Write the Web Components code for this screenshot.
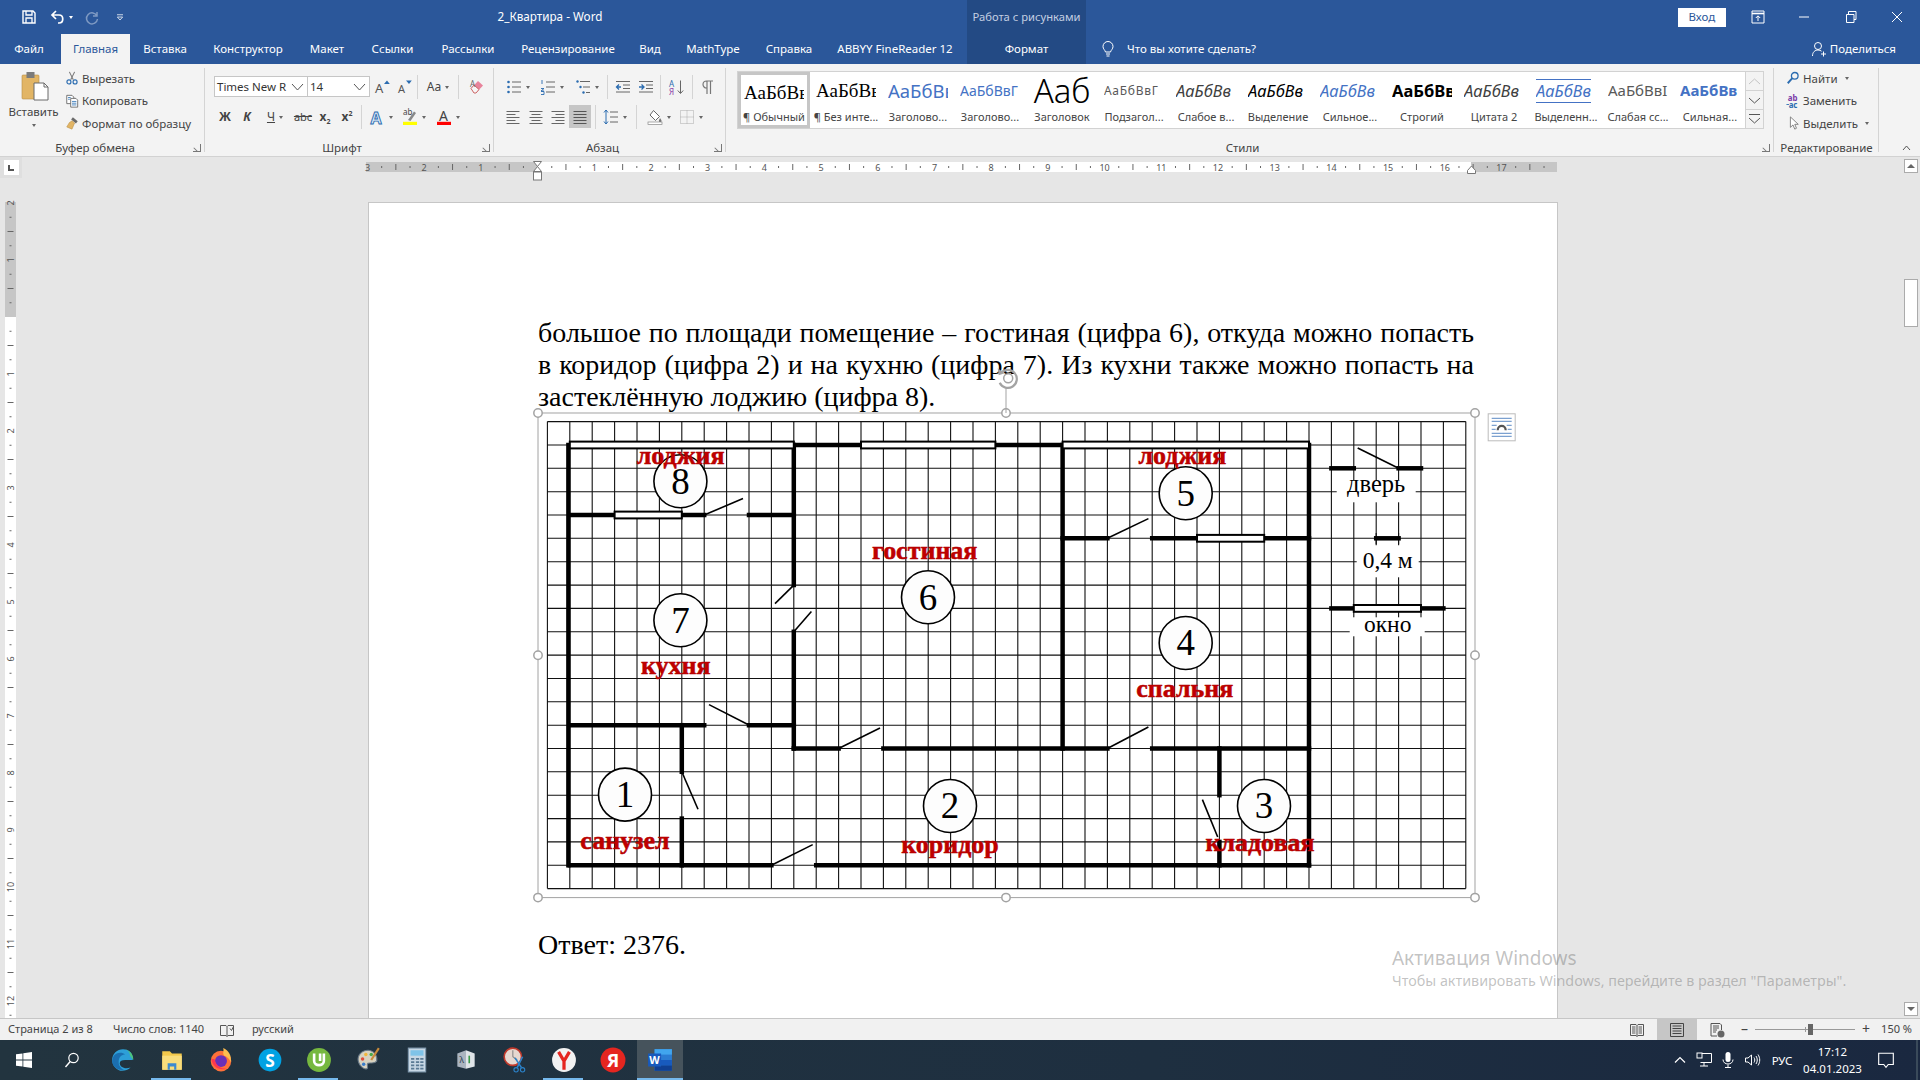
<!DOCTYPE html>
<html lang="ru">
<head>
<meta charset="utf-8">
<title>2_Квартира - Word</title>
<style>
  html, body { margin: 0; height: 1080px; overflow: hidden; }
  body { font: 12px "Noto Sans", "Open Sans", sans-serif; color: #444; display: flex; flex-direction: column; background: #e6e6e6; position: relative; }
</style>
</head>
<body>
<word-titlebar></word-titlebar>
<word-tabs></word-tabs>
<word-ribbon></word-ribbon>
<word-docarea></word-docarea>
<word-statusbar></word-statusbar>
<win-taskbar></win-taskbar>
<win-watermark></win-watermark>

<script>
const ICONS = {
    save: '<path d="M2 2h10l2 2v10H2z" fill="none" stroke="#fff" stroke-width="1.4"/><path d="M5 2v4h6V2M5 14V9h6v5" fill="none" stroke="#fff" stroke-width="1.3"/>',
    undo: '<path d="M6 2 2 6l4 4M2.5 6H9c5 0 5 8 0 8H8" fill="none" stroke="#fff" stroke-width="1.7"/>',
    redo: '<path d="M13 3v4H9M13 7a5.5 5.5 0 1 0 .5 3" fill="none" stroke="#7f9ac3" stroke-width="1.5"/>',
    qamore: '<path d="M4 5h8" stroke="#fff"/><path d="M4.5 8h7L8 12z" fill="none" stroke="#fff"/>',
    ribbonopt: '<path d="M2 2h12v12H2z" fill="none" stroke="#fff"/><path d="M2 4.5h12" stroke="#fff" stroke-width="1.6"/><path d="M8 12V7M5.8 9 8 6.8 10.2 9" fill="none" stroke="#fff"/>',
    min: '<path d="M3 8h10" stroke="#fff"/>',
    restore: '<path d="M3.5 5.5h7.5v8H3.5zM5.5 5.5v-3H13v8h-2" fill="none" stroke="#fff"/>',
    close: '<path d="m3 3 10 10M13 3 3 13" stroke="#fff"/>',
    bulb: '<path d="M5.5 11C5 9 3 8 3 5.5a5 5 0 0 1 10 0C13 8 11 9 10.500 11zM6 13h4M6.500 15h3" fill="none" stroke="#fff"/>',
    share: '<circle cx="7" cy="5" r="3.500" fill="none" stroke="#fff"/><path d="M1.500 15c0-4 2.500-6 5.500-6 1.500 0 2.500.5 3.500 1.200M12.500 10.500v5M10 13h5" fill="none" stroke="#fff"/>',
    paste: '<rect x="1" y="4" width="17" height="24" rx="1" fill="#e2b565" stroke="#b98d44" stroke-width=".6"/><rect x="5.500" y="1" width="8" height="6" fill="#7b7b7b"/><path d="M13 12h10l4 4v13H13z" fill="#fff" stroke="#6a6a6a"/><path d="M23 12v4h4" fill="none" stroke="#6a6a6a"/>',
    cut: '<path d="M5 1l4.500 9M11 1 6.500 10" stroke="#777" stroke-width="1.200"/><circle cx="4.500" cy="12.500" r="2.300" fill="none" stroke="#2b6cb0" stroke-width="1.300"/><circle cx="11.500" cy="12.500" r="2.300" fill="none" stroke="#2b6cb0" stroke-width="1.300"/>',
    copy: '<path d="M2 1.500h6l2 2V11H2z" fill="#fff" stroke="#666"/><path d="M6.500 5h6l2 2v8h-8z" fill="#fff" stroke="#666"/><path d="M8 8.500h5M8 10.500h5M8 12.500h5M3.500 4h3M3.500 6h2" stroke="#3a7ab8"/>',
    painter: '<path d="M9 1.500 14.500 6l-2 2.500L7 4z" fill="#6a6a6a"/><path d="M8 5.500l3 2.500-3 7-6-2.500 3-5z" fill="#e2b565" stroke="#b98d44" stroke-width=".6"/>',
    grow: '<text x="1" y="14" font-family="Noto Sans" font-size="13" fill="#555">A</text><path d="m10 5 3-3.500L15.800 5z" fill="#2b6cb0"/>',
    shrink: '<text x="2" y="14" font-family="Noto Sans" font-size="11" fill="#555">A</text><path d="m10 1.500 3 3.500 2.800-3.500z" fill="#2b6cb0"/>',
    eraser: '<path d="M2 9.500 9 2l5 4.500-7 7.500H5z" fill="#e8839b"/><path d="M2 9.500 5 6l5 4.500L7 14H5z" fill="#f6f6f6" stroke="#c66"/><text x="1" y="8" font-family="Noto Sans" font-size="8" fill="#666">A</text>',
    texteffect: '<text x="1.500" y="14.500" font-family="Noto Sans" font-weight="700" font-size="16" fill="#dbe9f7" stroke="#2b6cb0" stroke-width=".9">A</text>',
    marker: '<text x="1" y="6" font-family="Noto Sans" font-size="8" fill="#444">ab</text><path d="M6 11 12 2.500l2 1.500-5.500 8z" fill="#888"/><rect x="1" y="12.800" width="14" height="3.200" fill="#ff0"/>',
    fontcolor: '<text x="3" y="11.500" font-family="Noto Sans" font-size="14" fill="#444">A</text><rect x="1" y="12.800" width="14" height="3.200" fill="#f00"/>',
    bullets: '<circle cx="2.500" cy="3" r="1.300" fill="#2b6cb0"/><circle cx="2.500" cy="8" r="1.300" fill="#2b6cb0"/><circle cx="2.500" cy="13" r="1.300" fill="#2b6cb0"/><path d="M6 3h9M6 8h9M6 13h9" stroke="#666"/>',
    numbers: '<path d="M6 3h9M6 8h9M6 13h9" stroke="#666"/><path d="M2 1v4M1 9.500h3l-3 2.500h3M1 12.500h3v3H1" fill="none" stroke="#2b6cb0" stroke-width=".9"/>',
    multilevel: '<path d="M5 2.500h10M8 8h7M11 13.500h4" stroke="#666"/><circle cx="2.500" cy="2.500" r="1.200" fill="#2b6cb0"/><circle cx="5.500" cy="8" r="1.200" fill="#2b6cb0"/><circle cx="8.500" cy="13.500" r="1.200" fill="#2b6cb0"/>',
    indentdec: '<path d="M1 2.500h14M8 6h7M8 9.500h7M1 13h14" stroke="#666"/><path d="M6 8H1.500M4 5.500 1.500 8 4 10.500" fill="none" stroke="#2b6cb0" stroke-width="1.300"/>',
    indentinc: '<path d="M1 2.500h14M8 6h7M8 9.500h7M1 13h14" stroke="#666"/><path d="M1 8h5M3.500 5.500 6 8l-2.500 2.500" fill="none" stroke="#2b6cb0" stroke-width="1.300"/>',
    sort: '<text x="0" y="7.500" font-family="Noto Sans" font-size="8" fill="#2b6cb0">А</text><text x="0" y="15.500" font-family="Noto Sans" font-size="8" fill="#8a3aa8">Я</text><path d="M11.500 1.500v12.500M8.800 11.500l2.700 3 2.700-3" fill="none" stroke="#666"/>',
    pilcrow: '<path d="M7 2v13M10.500 2v13M13 2H6.500a3.500 3.500 0 0 0 0 7H7" fill="none" stroke="#777" stroke-width="1.200"/>',
    alignleft: '<path d="M1.500 2.500h13M1.500 5.500h9M1.500 8.500h13M1.500 11.500h9M1.500 14.500h13" stroke="#666"/>',
    aligncenter: '<path d="M1.500 2.500h13M3.500 5.500h9M1.500 8.500h13M3.500 11.500h9M1.500 14.500h13" stroke="#666"/>',
    alignright: '<path d="M1.500 2.500h13M5.500 5.500h9M1.500 8.500h13M5.500 11.500h9M1.500 14.500h13" stroke="#666"/>',
    justify: '<path d="M1.500 2.500h13M1.500 5.500h13M1.500 8.500h13M1.500 11.500h13M1.500 14.500h13" stroke="#555"/>',
    linespacing: '<path d="M7 3h8M7 8h8M7 13h8" stroke="#666"/><path d="M3 1v14M1 3.500 3 1l2 2.500M1 12.500 3 15l2-2.500" fill="none" stroke="#2b6cb0"/>',
    shading: '<path d="m6.500 1.500 6 6-4 4-5.500-5.500z" fill="#fff" stroke="#666"/><path d="M13 9c1 1.500 1.500 2 1.500 3a1.300 1.300 0 0 1-2.600 0c0-1 .5-1.500 1.100-3z" fill="#777"/><rect x="1" y="13" width="14" height="2.500" fill="#fff" stroke="#888" stroke-width=".7"/>',
    borders: '<path d="M1.500 1.500h13v13h-13zM8 1.500v13M1.500 8h13" fill="none" stroke="#aaa" stroke-dasharray="1 1"/>',
    find: '<circle cx="10" cy="5.500" r="3.800" fill="none" stroke="#2b6cb0" stroke-width="1.500"/><path d="m7 8.500-5 5.500" stroke="#2b6cb0" stroke-width="2.200"/>',
    replace: '<text x="2" y="7.500" font-family="Noto Sans" font-weight="700" font-size="9" fill="#7a3aa8">ab</text><text x="3" y="15.500" font-family="Noto Sans" font-weight="700" font-size="9" fill="#2b6cb0">ac</text><path d="M.5 12h3" stroke="#2b6cb0"/>',
    select: '<path d="M5 1v12l3-2.800L10 15l2-1-2-4.500h4z" fill="#fff" stroke="#777"/>',
    book: '<path d="M1.500 3.500h5.500l1 1 1-1h5.500v10h-5.500l-1 1-1-1H1.500zM8 4.500v10" fill="none" stroke="#555"/><path d="M11 6.500l1.500 2 2-4" fill="none" stroke="#555"/>',
    read: '<path d="M1.500 2.500h5.500l1 1 1-1h5.500v11H9l-1 1-1-1H1.500zM8 3.500v11M3 5h3.500M3 7h3.500M3 9h3.500M3 11h3.500M9.500 5H13M9.500 7H13M9.500 9H13M9.500 11H13" fill="none" stroke="#555"/>',
    print: '<path d="M1.500 1.500h13v13h-13zM3.500 4h9M3.500 6.500h9M3.500 9h9M3.500 11.500h9" fill="none" stroke="#444"/>',
    web: '<path d="M2 1.500h9l1.500 1.500v5M2 1.500v12.500h6M4 4h6M4 6h6M4 8h4M4 10h3" fill="none" stroke="#555"/><circle cx="12" cy="12" r="3.500" fill="#666"/>',
    netw: '<path d="M6 1.500h9.500v9h-11M8 10.500V14M4 14h8" fill="none" stroke="#fff"/><rect x="1" y="1" width="5" height="5" fill="#1b2a40" stroke="#fff"/>',
    mic: '<rect x="5.500" y="0" width="5" height="10" rx="2.500" fill="#fff"/><path d="M3 7.500c0 6 10 6 10 0M8 12.500V15M5 15.500h6" fill="none" stroke="#fff"/>',
    speaker: '<path d="M1.500 6h2.500l3.500-3v10L4 10H1.500z" fill="none" stroke="#fff"/><path d="M10 5.500c1 1.500 1 3.500 0 5M12 4c1.700 2.500 1.700 5.500 0 8M14 2.500c2.300 3.500 2.300 7.500 0 11" fill="none" stroke="#fff"/>',
    chevup: '<path d="m3 10.500 5-5 5 5" fill="none" stroke="#fff" stroke-width="1.200"/>',
    notify: '<path d="M1.500 2h13v10H10l-2 2.500L6 12H1.500z" fill="none" stroke="#fff"/>',
    winlogo: '<path d="M0 2.300 6.500 1.400V7.600H0zM7.300 1.300 16 0V7.600H7.300zM0 8.400h6.500v6.200L0 13.700zM7.300 8.400H16V16l-8.700-1.300z" fill="#fff"/>',
    search: '<circle cx="9.500" cy="6" r="4.700" fill="none" stroke="#fff" stroke-width="1.200"/><path d="M6.200 9.500 1.500 15" stroke="#fff" stroke-width="1.400"/>',
    edge: '<path d="M12 2a10 10 0 0 0-10 10c0 6 5 10 9 10 3 0 6-1 8-3-6 2-10-1-10-4 0-2 2-3 5-3h7c.5-6-3-10-9-10z" fill="#2d9fd8"/><path d="M3 9c2-4 8-5 11-2-3 0-6 2-6 7 0 3 2 6 5 7-6 1-11-3-11-8z" fill="#1b6fb0"/><path d="M21.500 12c.3-5-3-9-8-10 4 1 5 4 5 6z" fill="#4dc47d"/>',
    explorer: '<path d="M3 4h7l2 2h9v15H3z" fill="#f2c84b"/><path d="M3 8h18v13H3z" fill="#f8dd7c"/><path d="M8 15h8v6H8z" fill="#3b8ad0"/><path d="M10 18h4v3h-4z" fill="#f8dd7c"/>',
    firefox: '<circle cx="12" cy="13" r="9.500" fill="#ff7139"/><path d="M14 1c1 3-1 5 1 7 3 1 5 3 6 6 1-6-2-11-7-13z" fill="#ffbd4f"/><circle cx="12" cy="13" r="5.500" fill="#6a2fb8"/><path d="M3 11c1 7 7 11 14 9-5 0-10-3-11-9z" fill="#ff3750"/>',
    skype: '<circle cx="12" cy="12" r="10.500" fill="#00a2e3"/><text x="12" y="18" text-anchor="middle" font-family="Noto Sans" font-weight="700" font-size="16" fill="#fff">S</text>',
    utorrent: '<circle cx="12" cy="12" r="11" fill="#76b83f"/><path d="M7.500 6v7c0 5 9 5 9 0V6M13 6v7" fill="none" stroke="#fff" stroke-width="2.400"/>',
    paint: '<path d="M12 3C6 3 2 8 3 13c1 5 6 8 8 7 2-1-1-3 1-5 2-1 6 1 8-2 1-5-3-10-8-10z" fill="#d8d2c0" stroke="#6a7a88"/><circle cx="7" cy="11" r="1.600" fill="#e04b3a"/><circle cx="10" cy="7" r="1.600" fill="#f2b63c"/><circle cx="15" cy="7" r="1.600" fill="#4aa84a"/><circle cx="8" cy="16" r="1.600" fill="#3b7dc9"/><path d="m22 1-7 11" stroke="#c88a3a" stroke-width="2"/>',
    calc: '<rect x="4" y="1" width="16" height="22" fill="#c7d7e4" stroke="#7f98ad"/><rect x="6" y="3" width="12" height="5" fill="#7fc3e8"/><path d="M6.500 11h3M11 11h3M15 11h3M6.500 14h3M11 14h3M15 14h3M6.500 17h3M11 17h3M15 17h3M6.500 20h3M11 20h3M15 20h3" stroke="#5a7a94" stroke-width="1.600"/>',
    ocr: '<path d="M4 6 12 3v17L4 18z" fill="#aab4bf"/><path d="M12 3l8 3v12l-8 2z" fill="#dfe4e8"/><text x="8" y="15" text-anchor="middle" font-family="Noto Sans" font-size="8" fill="#345">λ</text><path d="M15 8v7" stroke="#3a9a4a" stroke-width="1.500"/>',
    snip: '<circle cx="10" cy="9" r="8" fill="#e6d8d0" stroke="#c0392b" stroke-width="1.500"/><path d="M10 3v6l4 3" stroke="#888" fill="none"/><path d="m12 10 6 9M19 9l-5 10" stroke="#2b82c9" stroke-width="1.500"/><circle cx="19" cy="21" r="2" fill="none" stroke="#2b82c9"/><circle cx="13" cy="21" r="2" fill="none" stroke="#2b82c9"/>',
    yabrowser: '<circle cx="12" cy="12" r="11" fill="#f2f2f2"/><path d="M7 4.500 12 13l5-8.500M12 13v8" fill="none" stroke="#e52620" stroke-width="3"/>',
    yandex: '<circle cx="12" cy="12" r="11.500" fill="#e52620"/><text x="12" y="18.500" text-anchor="middle" font-family="Noto Sans" font-weight="700" font-size="17" fill="#fff">Я</text>',
    word: '<path d="M7 2h16v20H7z" fill="#2b7cd3"/><path d="M7 2h16v5H7z" fill="#41a5ee"/><path d="M7 12h16v5H7z" fill="#185abd"/><path d="M7 17h16v5H7z" fill="#103f91"/><rect x="1" y="6" width="12" height="12" fill="#185abd"/><text x="7" y="16" text-anchor="middle" font-family="Noto Sans" font-weight="700" font-size="10" fill="#fff">W</text>',
    layout: '<path d="M2 3h20M2 6h20M2 18h20M2 21h20M2 10h5M17 10h5M2 14h4M18 14h4" stroke="#5b8ac4"/><path d="M8 15c0-6 8-6 8 0" fill="none" stroke="#555" stroke-width="2.200"/>'
};

class WIcon extends HTMLElement {
    connectedCallback() {
        let name = this.getAttribute('name');
        let size = this.getAttribute('size') || 16;
        let box = this.getAttribute('box') || 16;
        this.attachShadow({ mode: 'open' });
        this.shadowRoot.innerHTML = `
        <style>:host { display: inline-flex; flex: none; } svg { display: block; overflow: visible; }</style>
        <svg width="${size}" height="${size}" viewBox="0 0 ${box} ${box}">${ICONS[name]}</svg>`;
    }
}

class WordTitlebar extends HTMLElement {
    connectedCallback() {
        this.attachShadow({ mode: 'open' });
        this.shadowRoot.innerHTML = `
        <style>
            :host { display: flex; height: 34px; background: #2b579a; color: #fff; align-items: stretch; flex: none; }
            .qa { display: flex; align-items: center; width: 135px; padding-left: 21px; box-sizing: border-box; gap: 0; flex: none; }
            .qa w-icon:nth-child(2) { margin-left: 13px; }
            .qa .d { width: 0; height: 0; border: 2.500px solid transparent; border-top: 3px solid #fff; margin: 3px 0 0 3px; }
            .qa w-icon:nth-child(4) { margin-left: 11px; }
            .qa w-icon:nth-child(5) { margin-left: 14px; }
            .title { width: 830px; flex: none; text-align: center; line-height: 32px; font-size: 11.700px; }
            .ctx { width: 119px; margin-left: 2px; flex: none; background: #234a84; color: #c3cfe2; text-align: center; line-height: 33px; font-size: 11.200px; white-space: nowrap; }
            .right { margin-left: auto; display: flex; align-items: center; }
            .login { width: 48px; height: 19px; background: #fff; color: #2b579a; text-align: center; line-height: 18px; font-size: 11.500px; margin-right: 9px; }
            .btn { width: 46.300px; display: flex; justify-content: center; }
        </style>
        <div class="qa">
            <w-icon name="save"></w-icon><w-icon name="undo"></w-icon><span class="d"></span>
            <w-icon name="redo"></w-icon><w-icon name="qamore" size="12"></w-icon>
        </div>
        <div class="title">2_Квартира - Word</div>
        <div class="ctx">Работа с рисунками</div>
        <div class="right">
            <div class="login">Вход</div>
            <div class="btn"><w-icon name="ribbonopt"></w-icon></div>
            <div class="btn"><w-icon name="min"></w-icon></div>
            <div class="btn"><w-icon name="restore"></w-icon></div>
            <div class="btn"><w-icon name="close"></w-icon></div>
        </div>`;
    }
}

class WordTab extends HTMLElement {
    connectedCallback() {
        this.attachShadow({ mode: 'open' });
        this.shadowRoot.innerHTML = `
        <style>
            :host { display: block; flex: none; text-align: center; line-height: 29px; color: #fff; font-size: 11.500px; white-space: nowrap; }
            :host([active]) { background: #f3f3f3; color: #2b579a; }
            :host([ctx]) { background: #234a84; }
        </style>
        <slot></slot>`;
        this.style.width = this.getAttribute('w') + 'px';
        if (this.hasAttribute('gap')) this.style.marginLeft = this.getAttribute('gap') + 'px';
    }
}

class WordTabs extends HTMLElement {
    connectedCallback() {
        this.attachShadow({ mode: 'open' });
        this.shadowRoot.innerHTML = `
        <style>
            :host { display: flex; height: 30px; background: #2b579a; color: #fff; flex: none; font-size: 11.500px; }
            .tell { display: flex; align-items: center; margin-left: 14px; gap: 11px; padding-bottom: 1px; }
            .share { margin-left: auto; display: flex; align-items: center; gap: 3px; padding-right: 24px; padding-bottom: 1px; }
        </style>
        <word-tab w="58">Файл</word-tab>
        <word-tab w="69" gap="3" active>Главная</word-tab>
        <word-tab w="70">Вставка</word-tab>
        <word-tab w="96">Конструктор</word-tab>
        <word-tab w="62">Макет</word-tab>
        <word-tab w="69">Ссылки</word-tab>
        <word-tab w="82">Рассылки</word-tab>
        <word-tab w="118">Рецензирование</word-tab>
        <word-tab w="46">Вид</word-tab>
        <word-tab w="80">MathType</word-tab>
        <word-tab w="72">Справка</word-tab>
        <word-tab w="140">ABBYY FineReader 12</word-tab>
        <word-tab w="119" gap="2" ctx>Формат</word-tab>
        <div class="tell"><w-icon name="bulb"></w-icon><span>Что вы хотите сделать?</span></div>
        <div class="share"><w-icon name="share"></w-icon><span>Поделиться</span></div>`;
    }
}

// one ribbon tool: icon or slotted glyph, and an optional dropdown caret
class RBtn extends HTMLElement {
    connectedCallback() {
        let icon = this.getAttribute('icon');
        let size = this.getAttribute('size') || 16;
        this.attachShadow({ mode: 'open' });
        this.shadowRoot.innerHTML = `
        <style>
            :host { display: flex; align-items: center; justify-content: center; gap: 4px; flex: none; height: 100%; box-sizing: border-box; color: #444; font-size: 12px; }
            :host([on]) { background: #c6c6c6; }
            .c { width: 0; height: 0; border: 2.500px solid transparent; border-top: 3px solid #666; margin-top: 3px; }
        </style>
        ${icon ? `<w-icon name="${icon}" size="${size}"></w-icon>` : ''}<slot></slot>
        ${this.hasAttribute('caret') ? '<span class="c"></span>' : ''}`;
        this.style.width = this.getAttribute('w') + 'px';
    }
}

class RSep extends HTMLElement {
    connectedCallback() {
        this.attachShadow({ mode: 'open' });
        this.shadowRoot.innerHTML = `<style>:host { display: block; width: 1px; height: 24px; background: #d4d4d4; flex: none; align-self: center; }</style>`;
        if (this.hasAttribute('m')) this.style.margin = '0 ' + this.getAttribute('m') + 'px';
    }
}

class RGroup extends HTMLElement {
    connectedCallback() {
        this.attachShadow({ mode: 'open' });
        this.shadowRoot.innerHTML = `
        <style>
            :host { display: flex; flex-direction: column; flex: none; height: 92px; position: relative; box-sizing: border-box; }
            :host(:not([last])) .line { border-right: 1px solid #d4d4d4; }
            .line { position: absolute; right: 0; top: 4px; bottom: 4px; width: 0; }
            .body { height: 75px; }
            .foot { height: 16px; display: flex; justify-content: center; align-items: center; color: #444; font-size: 11.500px; }
            :host([launch]) .foot { padding-right: 15px; }
            .launch { position: absolute; right: 4px; bottom: 4px; width: 7px; height: 7px; border-left: 1px solid #777; border-bottom: 1px solid #777; transform: scaleX(-1); }
            .launch::after { content: ""; position: absolute; left: 2px; bottom: 1px; width: 5px; height: 1px; background: #777; transform: rotate(-45deg); }
        </style>
        <div class="body"><slot></slot></div>
        <div class="foot">${this.getAttribute('label')}</div>
        ${this.hasAttribute('launch') ? '<span class="launch"></span>' : ''}
        <span class="line"></span>`;
        this.style.width = this.getAttribute('w') + 'px';
    }
}

class RItem extends HTMLElement {
    connectedCallback() {
        this.attachShadow({ mode: 'open' });
        this.shadowRoot.innerHTML = `
        <style>
            :host { display: flex; align-items: center; height: 22px; gap: 3px; color: #444; font-size: 11.500px; white-space: nowrap; }
            .c { width: 0; height: 0; border: 2.500px solid transparent; border-top: 3px solid #666; margin: 3px 0 0 4px; }
        </style>
        <w-icon name="${this.getAttribute('icon')}" size="14"></w-icon><slot></slot>
        ${this.hasAttribute('caret') ? '<span class="c"></span>' : ''}`;
    }
}

class RbClipboard extends HTMLElement {
    connectedCallback() {
        this.attachShadow({ mode: 'open' });
        this.shadowRoot.innerHTML = `
        <style>
            :host { display: block; }
            .wrap { display: flex; height: 75px; }
            .paste { width: 67px; flex: none; display: flex; flex-direction: column; align-items: center; padding-top: 7px; box-sizing: border-box; font-size: 11.500px; color: #444; }
            .paste w-icon { margin-left: 5px; }
            .paste span { margin-top: 3px; line-height: 15px; }
            .paste i { width: 0; height: 0; border: 2.500px solid transparent; border-top: 3px solid #666; margin-top: 5px; }
            .items { display: flex; flex-direction: column; padding-top: 3px; margin-left: -2px; }
            r-item { height: 22.500px; }
        </style>
        <r-group w="205" label="Буфер обмена" launch>
            <div class="wrap">
                <div class="paste"><w-icon name="paste" size="30" box="30"></w-icon><span>Вставить</span><i></i></div>
                <div class="items">
                    <r-item icon="cut">Вырезать</r-item>
                    <r-item icon="copy">Копировать</r-item>
                    <r-item icon="painter">Формат по образцу</r-item>
                </div>
            </div>
        </r-group>`;
    }
}

class RbFont extends HTMLElement {
    connectedCallback() {
        this.attachShadow({ mode: 'open' });
        this.shadowRoot.innerHTML = `
        <style>
            :host { display: block; }
            .wrap { padding: 12px 0 0 9px; }
            .row { display: flex; height: 21px; align-items: center; }
            .row + .row { height: 23px; margin-top: 8px; }
            .combo { height: 21px; box-sizing: border-box; background: #fff; border: 1px solid #c6c6c6; display: flex; align-items: center; justify-content: space-between; padding: 0 3px 0 2px; font-size: 11.500px; color: #333; white-space: nowrap; overflow: hidden; flex: none; }
            .combo + .combo { border-left: 0; }
            .combo svg { flex: none; }
            b, u { font-size: 12px; }
            .abc { text-decoration: line-through; font-size: 11px; }
            sub, sup { font-size: 7px; line-height: 0; }
            .x { font-weight: 700; }
        </style>
        <r-group w="289" label="Шрифт" launch>
            <div class="wrap">
                <div class="row">
                    <div class="combo" style="width:94px"><span>Times New R</span><svg width="13" height="8" viewBox="0 0 13 8"><path d="m1 1 5.500 6L12 1" fill="none" stroke="#555"/></svg></div>
                    <div class="combo" style="width:62px"><span>14</span><svg width="13" height="8" viewBox="0 0 13 8"><path d="m1 1 5.500 6L12 1" fill="none" stroke="#555"/></svg></div>
                    <r-btn w="24" icon="grow"></r-btn><r-btn w="20" icon="shrink"></r-btn>
                    <r-sep m="3"></r-sep>
                    <r-btn w="34" caret>Aa</r-btn>
                    <r-sep m="3"></r-sep>
                    <r-btn w="30" icon="eraser"></r-btn>
                </div>
                <div class="row">
                    <r-btn w="22"><b>Ж</b></r-btn>
                    <r-btn w="22"><b><i>К</i></b></r-btn>
                    <r-btn w="34" caret><u>Ч</u></r-btn>
                    <r-btn w="22"><span class="abc">abc</span></r-btn>
                    <r-btn w="22"><span class="x">x<sub>2</sub></span></r-btn>
                    <r-btn w="22"><span class="x">x<sup>2</sup></span></r-btn>
                    <r-sep m="3"></r-sep>
                    <r-btn w="32" icon="texteffect" caret></r-btn>
                    <r-btn w="34" icon="marker" caret></r-btn>
                    <r-btn w="34" icon="fontcolor" caret></r-btn>
                </div>
            </div>
        </r-group>`;
    }
}

class RbParagraph extends HTMLElement {
    connectedCallback() {
        this.attachShadow({ mode: 'open' });
        this.shadowRoot.innerHTML = `
        <style>
            :host { display: block; }
            .wrap { padding: 12px 0 0 6px; }
            .row { display: flex; height: 21px; align-items: center; }
            .row + .row { height: 23px; margin-top: 8px; }
        </style>
        <r-group w="232" label="Абзац" launch>
            <div class="wrap">
                <div class="row">
                    <r-btn w="35" icon="bullets" caret></r-btn>
                    <r-btn w="33" icon="numbers" caret></r-btn>
                    <r-btn w="37" icon="multilevel" caret></r-btn>
                    <r-sep m="2"></r-sep>
                    <r-btn w="26" icon="indentdec"></r-btn><r-btn w="20" icon="indentinc"></r-btn>
                    <r-sep m="4"></r-sep>
                    <r-btn w="24" icon="sort"></r-btn>
                    <r-sep m="3"></r-sep>
                    <r-btn w="24" icon="pilcrow"></r-btn>
                </div>
                <div class="row">
                    <r-btn w="26" icon="alignleft"></r-btn>
                    <r-btn w="20" icon="aligncenter"></r-btn>
                    <r-btn w="23" icon="alignright"></r-btn>
                    <r-btn w="22" icon="justify" on></r-btn>
                    <r-sep m="4"></r-sep>
                    <r-btn w="29" icon="linespacing" caret></r-btn>
                    <r-sep m="7"></r-sep>
                    <r-btn w="29" icon="shading" caret></r-btn>
                    <r-btn w="35" icon="borders" caret></r-btn>
                </div>
            </div>
        </r-group>`;
    }
}

class StyleChip extends HTMLElement {
    connectedCallback() {
        this.attachShadow({ mode: 'open' });
        this.shadowRoot.innerHTML = `
        <style>
            :host { display: flex; flex-direction: column; align-items: center; width: 72px; flex: none; height: 56px; box-sizing: border-box; padding: 0 4px; overflow: hidden; }
            :host([sel]) { border: 3px solid #c6c6c6; padding: 0 1px; }
            .p { height: 37px; width: 60px; overflow: hidden; display: flex; align-items: center; justify-content: flex-start; white-space: nowrap; line-height: 37px; color: #000; }
            :host([center]) .p { justify-content: center; }
            :host([sel]) .p { height: 34px; }
            .l { font-size: 11px; line-height: 16px; color: #444; white-space: nowrap; }
            ::slotted(*) { flex: none; }
        </style>
        <div class="p"><slot></slot></div>
        <div class="l">${this.getAttribute('label')}</div>`;
    }
}

class RbStyles extends HTMLElement {
    connectedCallback() {
        let serif = 'font-family:Liberation Serif,serif';
        this.attachShadow({ mode: 'open' });
        this.shadowRoot.innerHTML = `
        <style>
            :host { display: block; }
            .wrap { padding: 7px 0 0 11px; display: flex; }
            .gallery { display: flex; height: 58px; box-sizing: border-box; border: 1px solid #d2d2d2; background: #fff; width: 1009px; flex: none; }
            .scroll { display: flex; flex-direction: column; width: 18px; height: 58px; box-sizing: border-box; border: 1px solid #d2d2d2; border-left: 0; }
            .scroll div { flex: 1; display: flex; align-items: center; justify-content: center; }
            .scroll div + div { border-top: 1px solid #d2d2d2; }
            span { display: block; }
        </style>
        <r-group w="1048" label="Стили" launch>
            <div class="wrap">
                <div class="gallery">
                    <style-chip label="¶ Обычный" sel><span style="${serif};font-size:19px">АаБбВв</span></style-chip>
                    <style-chip label="¶ Без инте..."><span style="${serif};font-size:19px">АаБбВв</span></style-chip>
                    <style-chip label="Заголово..."><span style="color:#4472c4;font-size:18.500px">АаБбВв</span></style-chip>
                    <style-chip label="Заголово..."><span style="color:#4472c4;font-size:14px">АаБбВвГ</span></style-chip>
                    <style-chip label="Заголовок" center><span style="font-size:33px;font-weight:300;line-height:34px">Ааб</span></style-chip>
                    <style-chip label="Подзагол..."><span style="color:#595959;font-size:12px;letter-spacing:.7px">АаБбВвГ</span></style-chip>
                    <style-chip label="Слабое в..."><span style="color:#404040;font-size:16.500px;font-style:italic">АаБбВв</span></style-chip>
                    <style-chip label="Выделение"><span style="font-size:16.500px;font-style:italic">АаБбВв</span></style-chip>
                    <style-chip label="Сильное..."><span style="color:#4472c4;font-size:16.500px;font-style:italic">АаБбВв</span></style-chip>
                    <style-chip label="Строгий"><span style="font-size:16.500px;font-weight:700">АаБбВв</span></style-chip>
                    <style-chip label="Цитата 2"><span style="color:#404040;font-size:16.500px;font-style:italic">АаБбВв</span></style-chip>
                    <style-chip label="Выделенн..."><span style="color:#4472c4;font-size:16.500px;font-style:italic;border-top:1px solid #4472c4;border-bottom:1px solid #4472c4;line-height:22px">АаБбВв</span></style-chip>
                    <style-chip label="Слабая сс..."><span style="color:#595959;font-size:15px;font-variant:small-caps">АаБбВвI</span></style-chip>
                    <style-chip label="Сильная..."><span style="color:#4472c4;font-size:15px;font-weight:700;font-variant:small-caps">АаБбВв</span></style-chip>
                </div>
                <div class="scroll">
                    <div><svg width="13" height="7"><path d="m1 6 5.500-5L12 6" fill="none" stroke="#c4c4c4"/></svg></div>
                    <div><svg width="13" height="7"><path d="m1 1 5.500 5L12 1" fill="none" stroke="#555"/></svg></div>
                    <div><svg width="13" height="10"><path d="M1 .5h11M1 4l5.500 5L12 4" fill="none" stroke="#555"/></svg></div>
                </div>
            </div>
        </r-group>`;
    }
}

class RbEditing extends HTMLElement {
    connectedCallback() {
        this.attachShadow({ mode: 'open' });
        this.shadowRoot.innerHTML = `
        <style>
            :host { display: block; }
            .wrap { padding: 3px 0 0 12px; display: flex; flex-direction: column; }
            r-item { height: 22.500px; }
        </style>
        <r-group w="105" label="Редактирование">
            <div class="wrap">
                <r-item icon="find" caret>Найти</r-item>
                <r-item icon="replace">Заменить</r-item>
                <r-item icon="select" caret>Выделить</r-item>
            </div>
        </r-group>`;
    }
}

class WordRibbon extends HTMLElement {
    connectedCallback() {
        this.attachShadow({ mode: 'open' });
        this.shadowRoot.innerHTML = `
        <style>
            :host { display: flex; height: 93px; box-sizing: border-box; background: #f3f3f3; border-bottom: 1px solid #d2d2d2; flex: none; position: relative; }
            .collapse { position: absolute; right: 9px; bottom: 5px; }
        </style>
        <rb-clipboard></rb-clipboard>
        <rb-font></rb-font>
        <rb-paragraph></rb-paragraph>
        <rb-styles></rb-styles>
        <rb-editing></rb-editing>
        <svg class="collapse" width="9" height="6"><path d="m1 5 3.500-4L8 5" fill="none" stroke="#555"/></svg>`;
    }
}

class HRuler extends HTMLElement {
    connectedCallback() {
        const cm = 56.7, zero = 537.6;
        let marks = '';
        for (let v = -3; v <= 17; v++) {
            let x = zero + v * cm;
            if (v !== 0) marks += `<text x="${x}" y="170.500" text-anchor="middle" font-family="Noto Sans" font-size="9" fill="#555">${Math.abs(v)}</text>`;
            for (const [f, h] of [[.25, 1], [.5, 3], [.75, 1]]) {
                let tx = x + f * cm;
                if (tx < 1557) marks += `<path d="M${tx} ${167 - h}v${h * 2}" stroke="#666"/>`;
            }
        }
        this.attachShadow({ mode: 'open' });
        this.shadowRoot.innerHTML = `
        <style>:host { display: block; height: 24px; } svg { display: block; overflow: visible; }</style>
        <svg width="1191" height="24" viewBox="366 157 1191 24">
            <rect x="366" y="162" width="1191" height="10" fill="#c6c6c6"/>
            <rect x="537.600" y="162" width="933.400" height="10" fill="#fff"/>
            ${marks}
            <path d="M533.500 161.500h8l-4 5 4 5h-8l4-5z" fill="#fff" stroke="#777"/>
            <rect x="533.500" y="172" width="8" height="8" fill="#fff" stroke="#777"/>
            <path d="M1467.500 173.500v-3l4-4.500 4 4.500v3z" fill="#fff" stroke="#777"/>
        </svg>`;
    }
}

class VRuler extends HTMLElement {
    connectedCallback() {
        const cm = 57, zero = 317;
        let marks = '';
        for (let v = -2; v <= 12; v++) {
            let y = zero + v * cm;
            if (v !== 0) marks += `<text transform="translate(13.500 ${y}) rotate(-90)" text-anchor="middle" font-family="Noto Sans" font-size="9" fill="#555">${Math.abs(v)}</text>`;
            for (const [f, w] of [[.25, 1], [.5, 3], [.75, 1]]) {
                let ty = y + f * cm;
                marks += `<path d="M${10.500 - w} ${ty}h${w * 2}" stroke="#666"/>`;
            }
        }
        this.attachShadow({ mode: 'open' });
        this.shadowRoot.innerHTML = `
        <style>:host { display: block; flex: 1; min-height: 0; overflow: hidden; } svg { display: block; }</style>
        <svg width="22" height="840" viewBox="0 178 22 840">
            <rect x="5" y="202" width="11" height="115" fill="#c6c6c6"/>
            <rect x="5" y="317" width="11" height="701" fill="#fff"/>
            ${marks}
        </svg>`;
    }
}

class FloorPlan extends HTMLElement {
    connectedCallback() {
        const X = i => +(546.7 + 22.4 * i).toFixed(1);
        const Y = j => +(421.3 + 23.35 * j).toFixed(1);
        let grid = '';
        for (let i = 0; i <= 41; i++) grid += `M${X(i)} ${Y(0)}V${Y(20)}`;
        for (let j = 0; j <= 20; j++) grid += `M${X(0)} ${Y(j)}H${X(41)}`;

        // thick walls, in grid cells: [i1, j1, i2, j2]
        const walls = [
            [11,1,14,1],[20,1,23,1],
            [11,1,11,7],[11,9,11,14],[23,1,23,14],[34,1,34,19],
            [1,4,3,4],[6,4,7,4],[9,4,11,4],
            [23,5,25,5],[27,5,29,5],[32,5,34,5],
            [1,13,7,13],[9,13,11,13],
            [6,13,6,15],[6,17,6,19],
            [11,14,13,14],[15,14,25,14],[27,14,34,14],
            [30,14,30,16],[30,18,30,19],
            [1,19,10,19],[12,19,34,19],
            [35,2,36,2],[38,2,39,2],[35,8,36,8],[39,8,40,8],[37,5,38,5]
        ];
        const windows = [[1,11,1],[14,20,1],[23,34,1],[3,6,4],[29,32,5],[36,39,8]];
        // door leaves in page pixels
        const leaves = [
            [X(11),Y(7),774.3,603.3],[X(11),Y(9),810.7,611.3],[X(7),Y(4),742.3,498.3],
            [748.7,725,708.3,704.3],[X(6),Y(15),697.3,809],[X(10),Y(19),812,844.3],
            [X(13),Y(14),879.3,727.7],[X(25),Y(14),1147.7,726.7],[X(25),Y(5),1147.7,518.3],
            [1217,836.7,1201.7,799.3],[X(38),Y(2),1357,447.7]
        ];
        const circles = [[8,679.7,481],[7,679.7,620],[6,927.3,597],[5,1185,493],[4,1185,642.7],[1,624.3,794.3],[2,949.3,805.7],[3,1263.3,805.7]];
        const labels = [
            ['лоджия',680,464],['кухня',675,674],['гостиная',924,559],['лоджия',1181.7,464],
            ['спальня',1184,697],['санузел',624.3,849],['коридор',949.3,853],['кладовая',1259.3,851]
        ];
        const legend = [
            [1336,480,79,22,'дверь',1375.5,491.7],
            [1356,544,62,33,'0,4 м',1387,567.7],
            [1349,617,75,19,'окно',1387,631.7]
        ];
        const handles = [[537.3,412.7],[1005.3,412.7],[1474.3,412.7],[537.3,655],[1474.3,655],[537.3,897.3],[1005.3,897.3],[1474.3,897.3]];

        this.attachShadow({ mode: 'open' });
        this.shadowRoot.innerHTML = `
        <style>
            :host { display: block; width: 937px; height: 484.600px; }
            svg { display: block; overflow: visible; }
            .lbl { font: 700 26px "Liberation Serif", serif; fill: #c00000; stroke: #b00000; stroke-width: .5px; text-anchor: middle; }
            .num { font: 37px "Liberation Serif", serif; fill: #000; text-anchor: middle; }
            .leg { font: 23.500px "Liberation Serif", serif; fill: #000; text-anchor: middle; }
            .leg.w { font-size: 24.500px; }
        </style>
        <svg width="937" height="484.600" viewBox="537.3 412.7 937 484.600">
            <path d="${grid}" fill="none" stroke="#111" stroke-width="1.100"/>
            ${legend.map(l => `<rect x="${l[0]}" y="${l[1]}" width="${l[2]}" height="${l[3]}" fill="#fff"/>`).join('')}
            <path d="M${X(37)} 532.700V545M${X(38)} 532.700V545" stroke="#111" stroke-width="1.100"/>
            <path d="M567.700 ${Y(1)}V${Y(19)}" stroke="#000" stroke-width="4.500" stroke-linecap="square"/>
            ${walls.map(w => `<path d="M${X(w[0])} ${Y(w[1])}L${X(w[2])} ${Y(w[3])}" stroke="#000" stroke-width="4.500" stroke-linecap="square"/>`).join('')}
            ${windows.map(w => `<rect x="${X(w[0])}" y="${Y(w[2]) - 3.400}" width="${X(w[1]) - X(w[0])}" height="6.800" fill="#fff" stroke="#000" stroke-width="2"/>`).join('')}
            ${leaves.map(l => `<path d="M${l[0]} ${l[1]}L${l[2]} ${l[3]}" stroke="#000" stroke-width="1.600"/>`).join('')}
            ${circles.map(c => `<circle cx="${c[1]}" cy="${c[2]}" r="26.500" fill="#fdfdfd" stroke="#000" stroke-width="1.600"/><text class="num" x="${c[1]}" y="${c[2] + 12.500}">${c[0]}</text>`).join('')}
            ${legend.map((l, n) => `<text class="leg${n === 0 ? ' w' : ''}" x="${l[5]}" y="${l[6]}">${l[4]}</text>`).join('')}
            ${labels.map(l => `<text class="lbl" x="${l[1]}" y="${l[2]}">${l[0]}</text>`).join('')}
            <rect x="537.300" y="412.700" width="937" height="484.600" fill="none" stroke="#a3a3a3"/>
            ${handles.map(h => `<circle cx="${h[0]}" cy="${h[1]}" r="4.200" fill="#fff" stroke="#a3a3a3" stroke-width="1.500"/>`).join('')}
            <path d="M1005.300 412.700V388" stroke="#a3a3a3"/>
            <path d="M1000.500 372.500a9 9 0 1 1-1.500 10" fill="none" stroke="#a3a3a3" stroke-width="2.200"/>
            <path d="m997 368 1 7 6-2z" fill="#a3a3a3"/>
            <circle cx="1007.500" cy="378" r="4.500" fill="none" stroke="#a3a3a3" stroke-width="1.500"/>
            <g transform="translate(1487 413)">
                <rect x=".5" y=".5" width="27" height="27" fill="#fff" stroke="#bbb"/>
                <g transform="translate(2 2)">${ICONS.layout}</g>
            </g>
        </svg>`;
    }
}

class WordPage extends HTMLElement {
    connectedCallback() {
        this.attachShadow({ mode: 'open' });
        this.shadowRoot.innerHTML = `
        <style>
            :host { display: block; width: 1188px; margin: 22px 0 0 347px; background: #fff; box-sizing: border-box; box-shadow: 0 0 0 1px #c6c6c6; padding: 113.500px 0 0 169px; height: 900px; color: #000; font: 28px/32.400px "Liberation Serif", serif; }
            p { margin: 0; width: 936px; }
            p span { display: block; white-space: nowrap; text-align: justify; text-align-last: justify; }
            p span:last-child { text-align-last: left; }
            floor-plan { margin-top: -1px; }
            .answer { margin-top: 32px; }
        </style>
        <p>
            <span>большое по площади помещение – гостиная (цифра 6), откуда можно попасть</span>
            <span>в коридор (цифра 2) и на кухню (цифра 7). Из кухни также можно попасть на</span>
            <span>застеклённую лоджию (цифра 8).</span>
        </p>
        <floor-plan></floor-plan>
        <p class="answer"><span>Ответ: 2376.</span></p>`;
    }
}

class WordScrollbar extends HTMLElement {
    connectedCallback() {
        this.attachShadow({ mode: 'open' });
        this.shadowRoot.innerHTML = `
        <style>
            :host { display: flex; flex-direction: column; width: 14px; margin-right: 2px; flex: none; padding-top: 2px; box-sizing: border-box; }
            .b { width: 14px; height: 14px; box-sizing: border-box; background: #fff; border: 1px solid #ababab; display: flex; align-items: center; justify-content: center; flex: none; }
            .t { width: 14px; height: 48px; margin-top: 106px; box-sizing: border-box; background: #fff; border: 1px solid #ababab; flex: none; }
            .b.down { margin-top: auto; margin-bottom: 2px; }
            i { width: 0; height: 0; border: 4px solid transparent; }
            .up i { border-bottom: 4px solid #666; border-top: 0; }
            .down i { border-top: 4px solid #666; border-bottom: 0; }
        </style>
        <div class="b up"><i></i></div>
        <div class="t"></div>
        <div class="b down"><i></i></div>`;
    }
}

class WordDocarea extends HTMLElement {
    connectedCallback() {
        this.attachShadow({ mode: 'open' });
        this.shadowRoot.innerHTML = `
        <style>
            :host { display: flex; height: 861px; flex: none; background: #e6e6e6; overflow: hidden; }
            .left { width: 22px; flex: none; display: flex; flex-direction: column; }
            .tabbox { height: 21px; background: #dfdfdf; display: flex; align-items: center; justify-content: center; flex: none; }
            .tabbox div { width: 15px; height: 15px; background: #fff; display: flex; align-items: center; justify-content: center; }
            .tabbox i { display: block; width: 6px; height: 6px; border-left: 2px solid #555; border-bottom: 2px solid #555; box-sizing: border-box; }
            .mid { flex: 1; min-width: 0; overflow: hidden; }
            h-ruler { margin-left: 344px; }
        </style>
        <div class="left">
            <div class="tabbox"><div><i></i></div></div>
            <v-ruler></v-ruler>
        </div>
        <div class="mid">
            <h-ruler></h-ruler>
            <word-page></word-page>
        </div>
        <word-scrollbar></word-scrollbar>`;
    }
}

class WordStatusbar extends HTMLElement {
    connectedCallback() {
        this.attachShadow({ mode: 'open' });
        this.shadowRoot.innerHTML = `
        <style>
            :host { display: flex; height: 22px; box-sizing: border-box; background: #f1f1f1; border-top: 1px solid #c6c6c6; align-items: center; font-size: 11px; color: #444; flex: none; white-space: nowrap; }
            span { margin-bottom: 2px; }
            .page { margin-left: 8px; width: 105px; }
            .words { width: 106px; }
            .lang { margin-left: 17px; }
            .right { margin-left: auto; display: flex; align-items: center; height: 100%; }
            .v { width: 40px; height: 100%; display: flex; align-items: center; justify-content: center; }
            .v.on { background: #c6c6c6; }
            .zoom { display: flex; align-items: center; width: 129px; margin: 0 8px 0 4px; justify-content: space-between; color: #444; font-size: 14px; }
            .slider { width: 100px; height: 1px; background: #999; position: relative; }
            .slider i { position: absolute; left: 53px; top: -5px; width: 5px; height: 11px; background: #666; }
            .slider b { position: absolute; left: 50px; top: -2px; width: 1px; height: 5px; background: #999; }
            .pct { width: 42px; text-align: right; padding-right: 8px; padding-bottom: 2px; box-sizing: border-box; }
        </style>
        <span class="page">Страница 2 из 8</span>
        <span class="words">Число слов: 1140</span>
        <w-icon name="book"></w-icon>
        <span class="lang">русский</span>
        <div class="right">
            <div class="v"><w-icon name="read"></w-icon></div>
            <div class="v on"><w-icon name="print"></w-icon></div>
            <div class="v"><w-icon name="web"></w-icon></div>
            <div class="zoom"><span>–</span><div class="slider"><b></b><i></i></div><span>+</span></div>
            <div class="pct">150 %</div>
        </div>`;
    }
}

class TaskIcon extends HTMLElement {
    connectedCallback() {
        this.attachShadow({ mode: 'open' });
        this.shadowRoot.innerHTML = `
        <style>
            :host { display: flex; width: 49px; height: 40px; align-items: center; justify-content: center; flex: none; position: relative; box-sizing: border-box; }
            :host([run])::after { content: ""; position: absolute; left: 4px; right: 5px; bottom: 0; height: 2px; background: #76b9ed; }
            :host([cur]) { background: #46535c; width: 46px; }
            :host([cur])::after { left: 0; right: 0; }
        </style>
        <w-icon name="${this.getAttribute('name')}" size="${this.getAttribute('size') || 26}" box="${this.getAttribute('box') || 24}"></w-icon>`;
    }
}

class WinTaskbar extends HTMLElement {
    connectedCallback() {
        this.attachShadow({ mode: 'open' });
        this.shadowRoot.innerHTML = `
        <style>
            :host { display: flex; height: 40px; flex: none; background: linear-gradient(90deg, #22343f, #1e2f40 60%, #1a2840); color: #fff; font-size: 12px; align-items: stretch; }
            .sq { width: 48px; display: flex; align-items: center; justify-content: center; flex: none; }
            .tray { margin-left: auto; display: flex; align-items: center; }
            .t { width: 24px; display: flex; justify-content: center; }
            .lang { width: 36px; text-align: center; font-size: 11.500px; }
            .clock { width: 65px; text-align: center; font-size: 11.500px; line-height: 17px; }
            .note { width: 42px; display: flex; justify-content: center; }
            .end { width: 11px; height: 100%; box-sizing: border-box; border-right: 2px solid #3a4a5a; margin-right: 2px; }
        </style>
        <div class="sq"><w-icon name="winlogo"></w-icon></div>
        <div class="sq"><w-icon name="search"></w-icon></div>
        <div style="width:2px"></div>
        <task-icon name="edge"></task-icon>
        <task-icon name="explorer" run></task-icon>
        <task-icon name="firefox"></task-icon>
        <task-icon name="skype"></task-icon>
        <task-icon name="utorrent" run></task-icon>
        <task-icon name="paint"></task-icon>
        <task-icon name="calc"></task-icon>
        <task-icon name="ocr"></task-icon>
        <task-icon name="snip"></task-icon>
        <task-icon name="yabrowser" run></task-icon>
        <task-icon name="yandex"></task-icon>
        <task-icon name="word" run cur></task-icon>
        <div class="tray">
            <div class="t"><w-icon name="chevup"></w-icon></div>
            <div class="t"><w-icon name="netw"></w-icon></div>
            <div class="t"><w-icon name="mic"></w-icon></div>
            <div class="t"><w-icon name="speaker"></w-icon></div>
            <div class="lang">РУС</div>
            <div class="clock">17:12<br>04.01.2023</div>
            <div class="note"><w-icon name="notify" size="18"></w-icon></div>
            <div class="end"></div>
        </div>`;
    }
}

class WinWatermark extends HTMLElement {
    connectedCallback() {
        this.attachShadow({ mode: 'open' });
        this.shadowRoot.innerHTML = `
        <style>
            :host { position: absolute; left: 1392px; top: 945px; color: rgba(120,120,120,.45); pointer-events: none; white-space: nowrap; font-family: "Noto Sans", "Open Sans", sans-serif; }
            div { font-size: 19px; line-height: 26px; }
            small { display: block; font-size: 14.350px; line-height: 20px; }
        </style>
        <div>Активация Windows</div>
        <small>Чтобы активировать Windows, перейдите в раздел "Параметры".</small>`;
    }
}

customElements.define('w-icon', WIcon);
customElements.define('word-titlebar', WordTitlebar);
customElements.define('word-tab', WordTab);
customElements.define('word-tabs', WordTabs);
customElements.define('r-btn', RBtn);
customElements.define('r-sep', RSep);
customElements.define('r-group', RGroup);
customElements.define('r-item', RItem);
customElements.define('rb-clipboard', RbClipboard);
customElements.define('rb-font', RbFont);
customElements.define('rb-paragraph', RbParagraph);
customElements.define('style-chip', StyleChip);
customElements.define('rb-styles', RbStyles);
customElements.define('rb-editing', RbEditing);
customElements.define('word-ribbon', WordRibbon);
customElements.define('h-ruler', HRuler);
customElements.define('v-ruler', VRuler);
customElements.define('floor-plan', FloorPlan);
customElements.define('word-page', WordPage);
customElements.define('word-scrollbar', WordScrollbar);
customElements.define('word-docarea', WordDocarea);
customElements.define('word-statusbar', WordStatusbar);
customElements.define('task-icon', TaskIcon);
customElements.define('win-taskbar', WinTaskbar);
customElements.define('win-watermark', WinWatermark);
</script>
</body>
</html>
